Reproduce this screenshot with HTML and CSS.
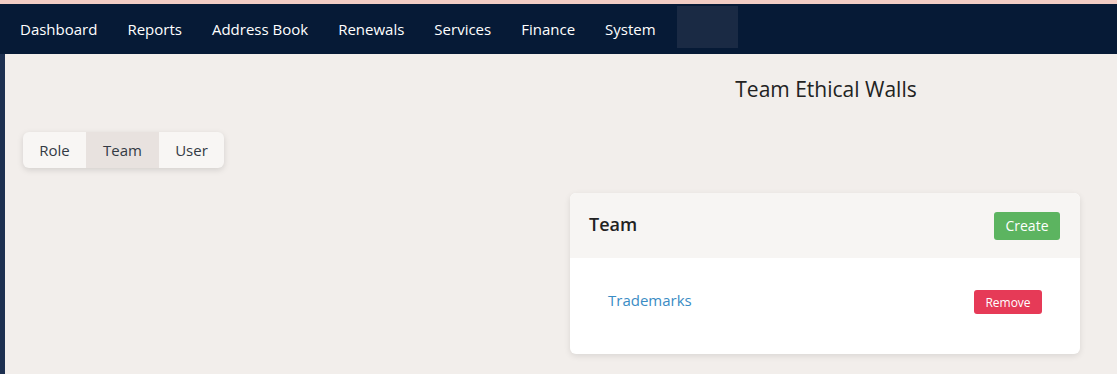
FILE: index.html
```html
<!DOCTYPE html>
<html>
<head>
<meta charset="utf-8">
<link rel="stylesheet" href="styles.css">
</head>
<body>
<header class="topbar">
  <nav class="nav">
    <a class="nav-item">Dashboard</a>
    <a class="nav-item">Reports</a>
    <a class="nav-item">Address Book</a>
    <a class="nav-item">Renewals</a>
    <a class="nav-item">Services</a>
    <a class="nav-item">Finance</a>
    <a class="nav-item">System</a>
    <span class="nav-slot"></span>
  </nav>
</header>
<main class="main">
  <div class="layout">
    <div class="left-col">
      <div class="tabs">
        <button class="tab">Role</button>
        <button class="tab active">Team</button>
        <button class="tab">User</button>
      </div>
    </div>
    <div class="right-col">
      <h1 class="page-title">Team Ethical Walls</h1>
      <section class="card">
        <div class="card-header">
          <h2 class="card-title">Team</h2>
          <button class="btn btn-create">Create</button>
        </div>
        <div class="card-body">
          <div class="row">
            <a class="link">Trademarks</a>
            <button class="btn btn-remove">Remove</button>
          </div>
        </div>
      </section>
    </div>
  </div>
</main>
</body>
</html>
```
FILE: styles.css
```css
* { box-sizing: border-box; }
html, body { margin: 0; padding: 0; }
body {
  font-family: "Open Sans", "Noto Sans", sans-serif;
  background: #f2eeeb;
  height: 374px;
  overflow: hidden;
}
.topbar {
  border-top: 4px solid #f2cdc4;
  background: #061a36;
  height: 54px;
}
.nav {
  display: flex;
  align-items: center;
  height: 50px;
  padding-left: 20px;
  gap: 30px;
}
.nav-item {
  color: #ffffff;
  font-size: 15px;
  line-height: 20px;
}
.nav-slot {
  width: 61px;
  height: 42px;
  background: #1a2a44;
  margin-left: -9px;
  align-self: flex-start;
  margin-top: 2px;
}
.main {
  border-left: 5px solid #1d3050;
  height: 320px;
}
.layout {
  display: grid;
  grid-template-columns: 547px 510px;
  padding-left: 18px;
}
.left-col {
  padding-top: 78px;
}
.tabs {
  display: inline-flex;
  background: #f8f6f4;
  border-radius: 6px;
  overflow: hidden;
  box-shadow: 0 2px 6px rgba(0,0,0,0.13);
  height: 36px;
}
.tab {
  border: 0;
  background: transparent;
  font-family: inherit;
  font-size: 15px;
  color: #333a44;
  padding: 0 16px;
  height: 36px;
}
.tab:first-child { width: 63px; }
.tab.active { background: #e8e2df; width: 73px; }
.tab:last-child { width: 65px; }
.page-title {
  margin: 21px 0 0;
  text-align: center;
  font-size: 21px;
  font-weight: 400;
  color: #222;
  line-height: 28px;
  padding-left: 2px;
}
.card {
  margin-top: 90px;
  background: #fff;
  border-radius: 6px;
  box-shadow: 0 2px 6px rgba(0,0,0,0.10);
  overflow: hidden;
}
.card-header {
  display: flex;
  align-items: center;
  justify-content: space-between;
  height: 65px;
  background: #f7f5f3;
  padding: 0 20px 0 19px;
}
.card-title {
  margin: 0 0 4px;
  font-size: 18px;
  font-weight: 600;
  color: #222;
}
.btn {
  border: 0;
  color: #fff;
  font-family: inherit;
  border-radius: 3px;
}
.btn-create {
  background: #5cb460;
  font-size: 14px;
  width: 66px;
  height: 28px;
  padding: 0;
}
.card-body {
  padding: 32px 38px 40px 38px;
}
.row {
  display: flex;
  align-items: center;
  justify-content: space-between;
  height: 24px;
}
.link {
  color: #3a8cc4;
  font-size: 15px;
  margin-bottom: 4px;
}
.btn-remove {
  background: #e63a57;
  font-size: 12px;
  width: 68px;
  height: 24px;
  padding: 0;
}
```
